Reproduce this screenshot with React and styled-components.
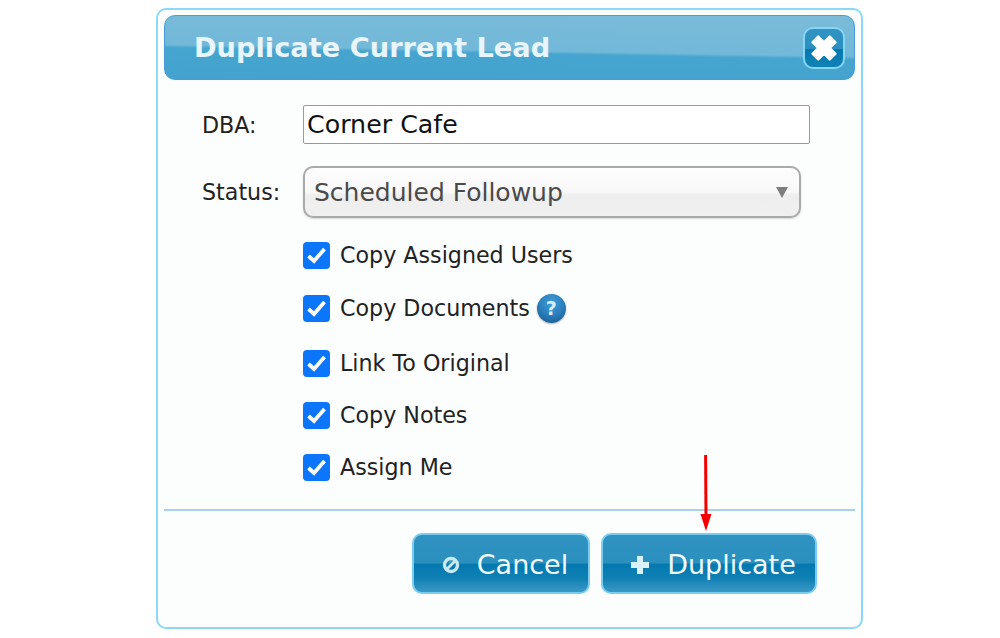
import styled, { createGlobalStyle } from "styled-components";

const GlobalStyle = createGlobalStyle`
  html, body {
    margin: 0;
    padding: 0;
    background: #ffffff;
  }
  body {
    font-family: "DejaVu Sans", Verdana, sans-serif;
  }
`;

const options = [
  { label: "Copy Assigned Users", gap: 0 },
  { label: "Copy Documents", help: true, gap: 25 },
  { label: "Link To Original", gap: 27 },
  { label: "Copy Notes", gap: 24 },
  { label: "Assign Me", gap: 24 },
];

const App = () => {
  return (
    <>
      <GlobalStyle />
      <Page>
        <Dialog>
          <Header>
            <Title>Duplicate Current Lead</Title>
            <CloseButton aria-label="Close">
              <svg width="30" height="30" viewBox="0 0 26 26">
                <path d="M3 8 L8 3 L13 8 L18 3 L23 8 L18 13 L23 18 L18 23 L13 18 L8 23 L3 18 L8 13 Z" fill="#fff" stroke="#fff" strokeWidth="2" strokeLinejoin="round" />
              </svg>
            </CloseButton>
          </Header>

          <Form>
            <Row>
              <Label>DBA:</Label>
              <TextInput defaultValue="Corner Cafe" />
            </Row>
            <StatusRow>
              <Label>Status:</Label>
              <Select>
                <span>Scheduled Followup</span>
                <Caret />
              </Select>
            </StatusRow>
            <Checks>
              {options.map((o) => (
                <CheckRow key={o.label} $gap={o.gap}>
                  <CheckBox>
                    <svg width="21" height="19" viewBox="0 0 21 19">
                      <path d="M2.5 10 L8 15 L18.5 3" fill="none" stroke="#fff" strokeWidth="3.8" />
                    </svg>
                  </CheckBox>
                  <CheckLabel>{o.label}</CheckLabel>
                  {o.help && <HelpIcon>?</HelpIcon>}
                </CheckRow>
              ))}
            </Checks>
          </Form>

          <Footer>
            <ArrowMark width="12" height="77" viewBox="0 0 12 77">
              <line x1="5.6" y1="0" x2="6" y2="62" stroke="#f40000" strokeWidth="3" />
              <path d="M0.5 59 L11.5 59 L6 76 Z" fill="#f40000" />
            </ArrowMark>
            <ActionButton $width={178}>
              <svg width="18" height="18" viewBox="0 0 18 18">
                <circle cx="9" cy="9" r="6.5" fill="none" stroke="#c8e8f2" strokeWidth="3.4" />
                <line x1="5" y1="13" x2="13" y2="5" stroke="#c8e8f2" strokeWidth="2.8" />
              </svg>
              Cancel
            </ActionButton>
            <ActionButton $width={216}>
              <svg width="20" height="20" viewBox="0 0 20 20">
                <path d="M7 1 H13 V7 H19 V13 H13 V19 H7 V13 H1 V7 H7 Z" fill="#d8f2f8" />
              </svg>
              Duplicate
            </ActionButton>
          </Footer>
        </Dialog>
      </Page>
    </>
  );
};

const Page = styled.div`
  width: 1000px;
  height: 638px;
  padding: 8px 0 0 156px;
  box-sizing: border-box;
  overflow: hidden;
`;

const Dialog = styled.div`
  width: 707px;
  height: 621px;
  box-sizing: border-box;
  padding: 5px 6px 0;
  background: #fcfefe;
  border: 2px solid #8bd9f7;
  border-radius: 10px;
`;

const Header = styled.div`
  height: 65px;
  box-sizing: border-box;
  display: flex;
  align-items: center;
  justify-content: space-between;
  padding: 0 9px 0 29px;
  border: 1px solid #4a9cd6;
  border-radius: 11px;
  background: linear-gradient(181deg, #7abbd9 0%, #72b8d8 54%, #46a5cf 58%, #43a3ce 100%);
`;

const Title = styled.h1`
  margin: 0;
  font-size: 27.25px;
  font-weight: 700;
  color: #e8f5fa;
`;

const CloseButton = styled.button`
  width: 42px;
  height: 42px;
  padding: 0;
  display: flex;
  align-items: center;
  justify-content: center;
  border: 2px solid #85d5f5;
  border-radius: 10px;
  background: linear-gradient(180deg, #3093c1 0%, #2c90bf 52%, #0478af 54%, #1082b5 100%);
`;

const Form = styled.div`
  padding: 25px 0 0 38px;
`;

const Row = styled.div`
  display: flex;
  align-items: center;
`;

const StatusRow = styled(Row)`
  margin-top: 22px;
`;

const Label = styled.label`
  width: 101px;
  font-size: 22.2px;
  color: #222;
`;

const TextInput = styled.input`
  width: 507px;
  height: 39px;
  box-sizing: border-box;
  padding: 0 3px;
  background: #fff;
  border: 1px solid #999;
  border-radius: 2px;
  font-family: inherit;
  font-size: 25.3px;
  color: #111;
  outline: none;
`;

const Select = styled.div`
  width: 498px;
  height: 52px;
  box-sizing: border-box;
  display: flex;
  align-items: center;
  justify-content: space-between;
  padding: 0 11px 0 9px;
  border: 2px solid #aaa;
  border-radius: 10px;
  background: linear-gradient(180deg, #fdfdfd 0%, #f8f8f8 50%, #eeeeee 56%, #f0f0f0 100%);
  box-shadow: 0 1px 2px rgba(0, 0, 0, 0.15);
  font-size: 25px;
  color: #4a4a4a;
`;

const Caret = styled.div`
  width: 0;
  height: 0;
  border-left: 6px solid transparent;
  border-right: 6px solid transparent;
  border-top: 11px solid #7d7d7d;
`;

const Checks = styled.div`
  margin-top: 23px;
  padding-left: 101px;
`;

const CheckRow = styled.div`
  display: flex;
  align-items: center;
  height: 28px;
  margin-top: ${(p) => p.$gap}px;
`;

const CheckBox = styled.div`
  width: 27px;
  height: 27px;
  display: flex;
  align-items: center;
  justify-content: center;
  border-radius: 4px;
  background: #0b75fb;
`;

const CheckLabel = styled.span`
  margin-left: 10px;
  font-size: 22.2px;
  color: #222;
`;

const HelpIcon = styled.span`
  width: 29px;
  height: 29px;
  margin-left: 7px;
  display: flex;
  align-items: center;
  justify-content: center;
  border-radius: 50%;
  background: radial-gradient(circle at 50% 30%, #3f9bd6 0%, #2a7fbd 50%, #174f80 100%);
  box-shadow: 0 1px 2px rgba(0, 0, 0, 0.3);
  font-size: 19px;
  font-weight: 700;
  color: #d8ecf6;
`;

const Footer = styled.div`
  position: relative;
  margin-top: 28px;
  height: 84px;
  box-sizing: border-box;
  border-top: 2px solid #a9d2ea;
  display: flex;
  justify-content: flex-end;
  align-items: flex-start;
  gap: 11px;
  padding: 22px 38px 0 0;
`;

const ArrowMark = styled.svg`
  position: absolute;
  left: 536px;
  top: -56px;
`;

const ActionButton = styled.button`
  width: ${(p) => p.$width}px;
  height: 61px;
  box-sizing: border-box;
  display: flex;
  align-items: center;
  justify-content: center;
  gap: 17px;
  padding: 2px 0 0 8px;
  border: 2px solid #79cdf0;
  border-radius: 10px;
  background: linear-gradient(180deg, #2f92c0 0%, #2c90bf 49%, #0478af 51%, #0e80b3 75%, #3a98c4 100%);
  font-family: inherit;
  font-size: 27px;
  color: #f2fafd;
`;

export default App;
